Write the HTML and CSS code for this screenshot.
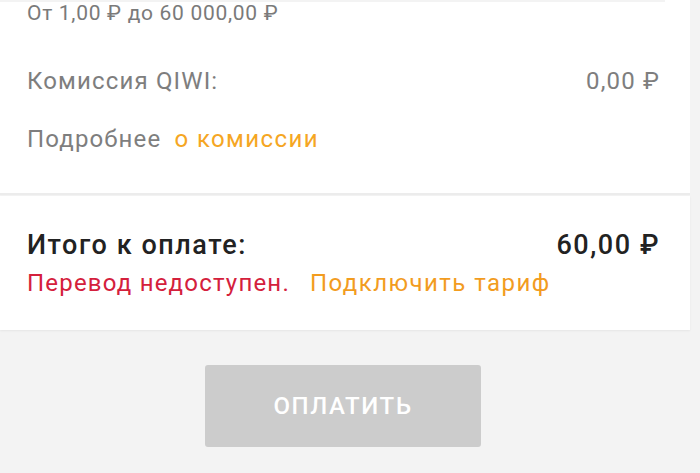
FILE: index.html
```html
<!DOCTYPE html>
<html lang="ru">
<head>
<meta charset="utf-8">
<link rel="stylesheet" href="styles.css">
</head>
<body>
<div class="page">
  <section class="card card-top">
    <div class="field-line"></div>
    <div class="limits">От 1,00 ₽ до 60 000,00 ₽</div>
    <div class="row fee">
      <span>Комиссия QIWI:</span>
      <span>0,00 ₽</span>
    </div>
    <div class="more">Подробнее <a class="link">о комиссии</a></div>
  </section>
  <section class="card card-total">
    <div class="row total">
      <span>Итого к оплате:</span>
      <span>60,00 ₽</span>
    </div>
    <div class="warn"><span class="err">Перевод недоступен.</span><a class="tariff">Подключить тариф</a></div>
  </section>
  <div class="actions">
    <button class="pay" disabled>ОПЛАТИТЬ</button>
  </div>
</div>
</body>
</html>
```
FILE: styles.css
```css
* { box-sizing: border-box; }
html, body { margin: 0; padding: 0; }
body {
  background: #f3f3f3;
  font-family: Roboto, "Noto Sans", sans-serif;
  width: 700px;
  height: 473px;
  overflow: hidden;
}
.page { width: 690px; }
.card {
  background: #fff;
  padding: 0 30px 0 27px;
}
.card-top {
  height: 195px;
  border-bottom: 2px solid #ececec;
}
.field-line {
  height: 2px;
  background: #f3f3f3;
  margin-right: -5px;
  margin-left: -27px;
}
.limits {
  font-size: 21px;
  letter-spacing: 0.7px;
  color: #7a7a7a;
  line-height: 26px;
  margin-top: -2px;
}
.row {
  display: flex;
  justify-content: space-between;
}
.fee {
  margin-top: 41px;
  font-size: 24px;
  letter-spacing: 1.15px;
  color: #7e7e7e;
  line-height: 28px;
}
.more {
  margin-top: 30px;
  font-size: 24px;
  color: #7e7e7e;
  line-height: 28px;
  letter-spacing: 1.15px;
}
.link { color: #f5a623; margin-left: 6px; letter-spacing: 1.4px; }
.card-total {
  margin-top: 1px;
  height: 134px;
  padding-top: 34px;
  box-shadow: 0 1px 2px rgba(0,0,0,0.06);
}
.total {
  font-size: 27px;
  font-weight: 500;
  letter-spacing: 1.55px;
  color: #222;
  line-height: 30px;
}
.warn {
  font-size: 24px;
  line-height: 28px;
  margin-top: 9px;
}
.err { color: #d4203c; letter-spacing: 1.2px; }
.tariff { color: #f29c1f; margin-left: 20px; letter-spacing: 1.45px; }
.actions {
  display: flex;
  justify-content: center;
  padding-top: 35px;
  padding-right: 4px;
}
.pay {
  width: 276px;
  height: 82px;
  border: 0;
  border-radius: 3px;
  background: #cccccc;
  color: #fff;
  font-family: Roboto, sans-serif;
  font-size: 24px;
  font-weight: 500;
  letter-spacing: 1.6px;
}
```
